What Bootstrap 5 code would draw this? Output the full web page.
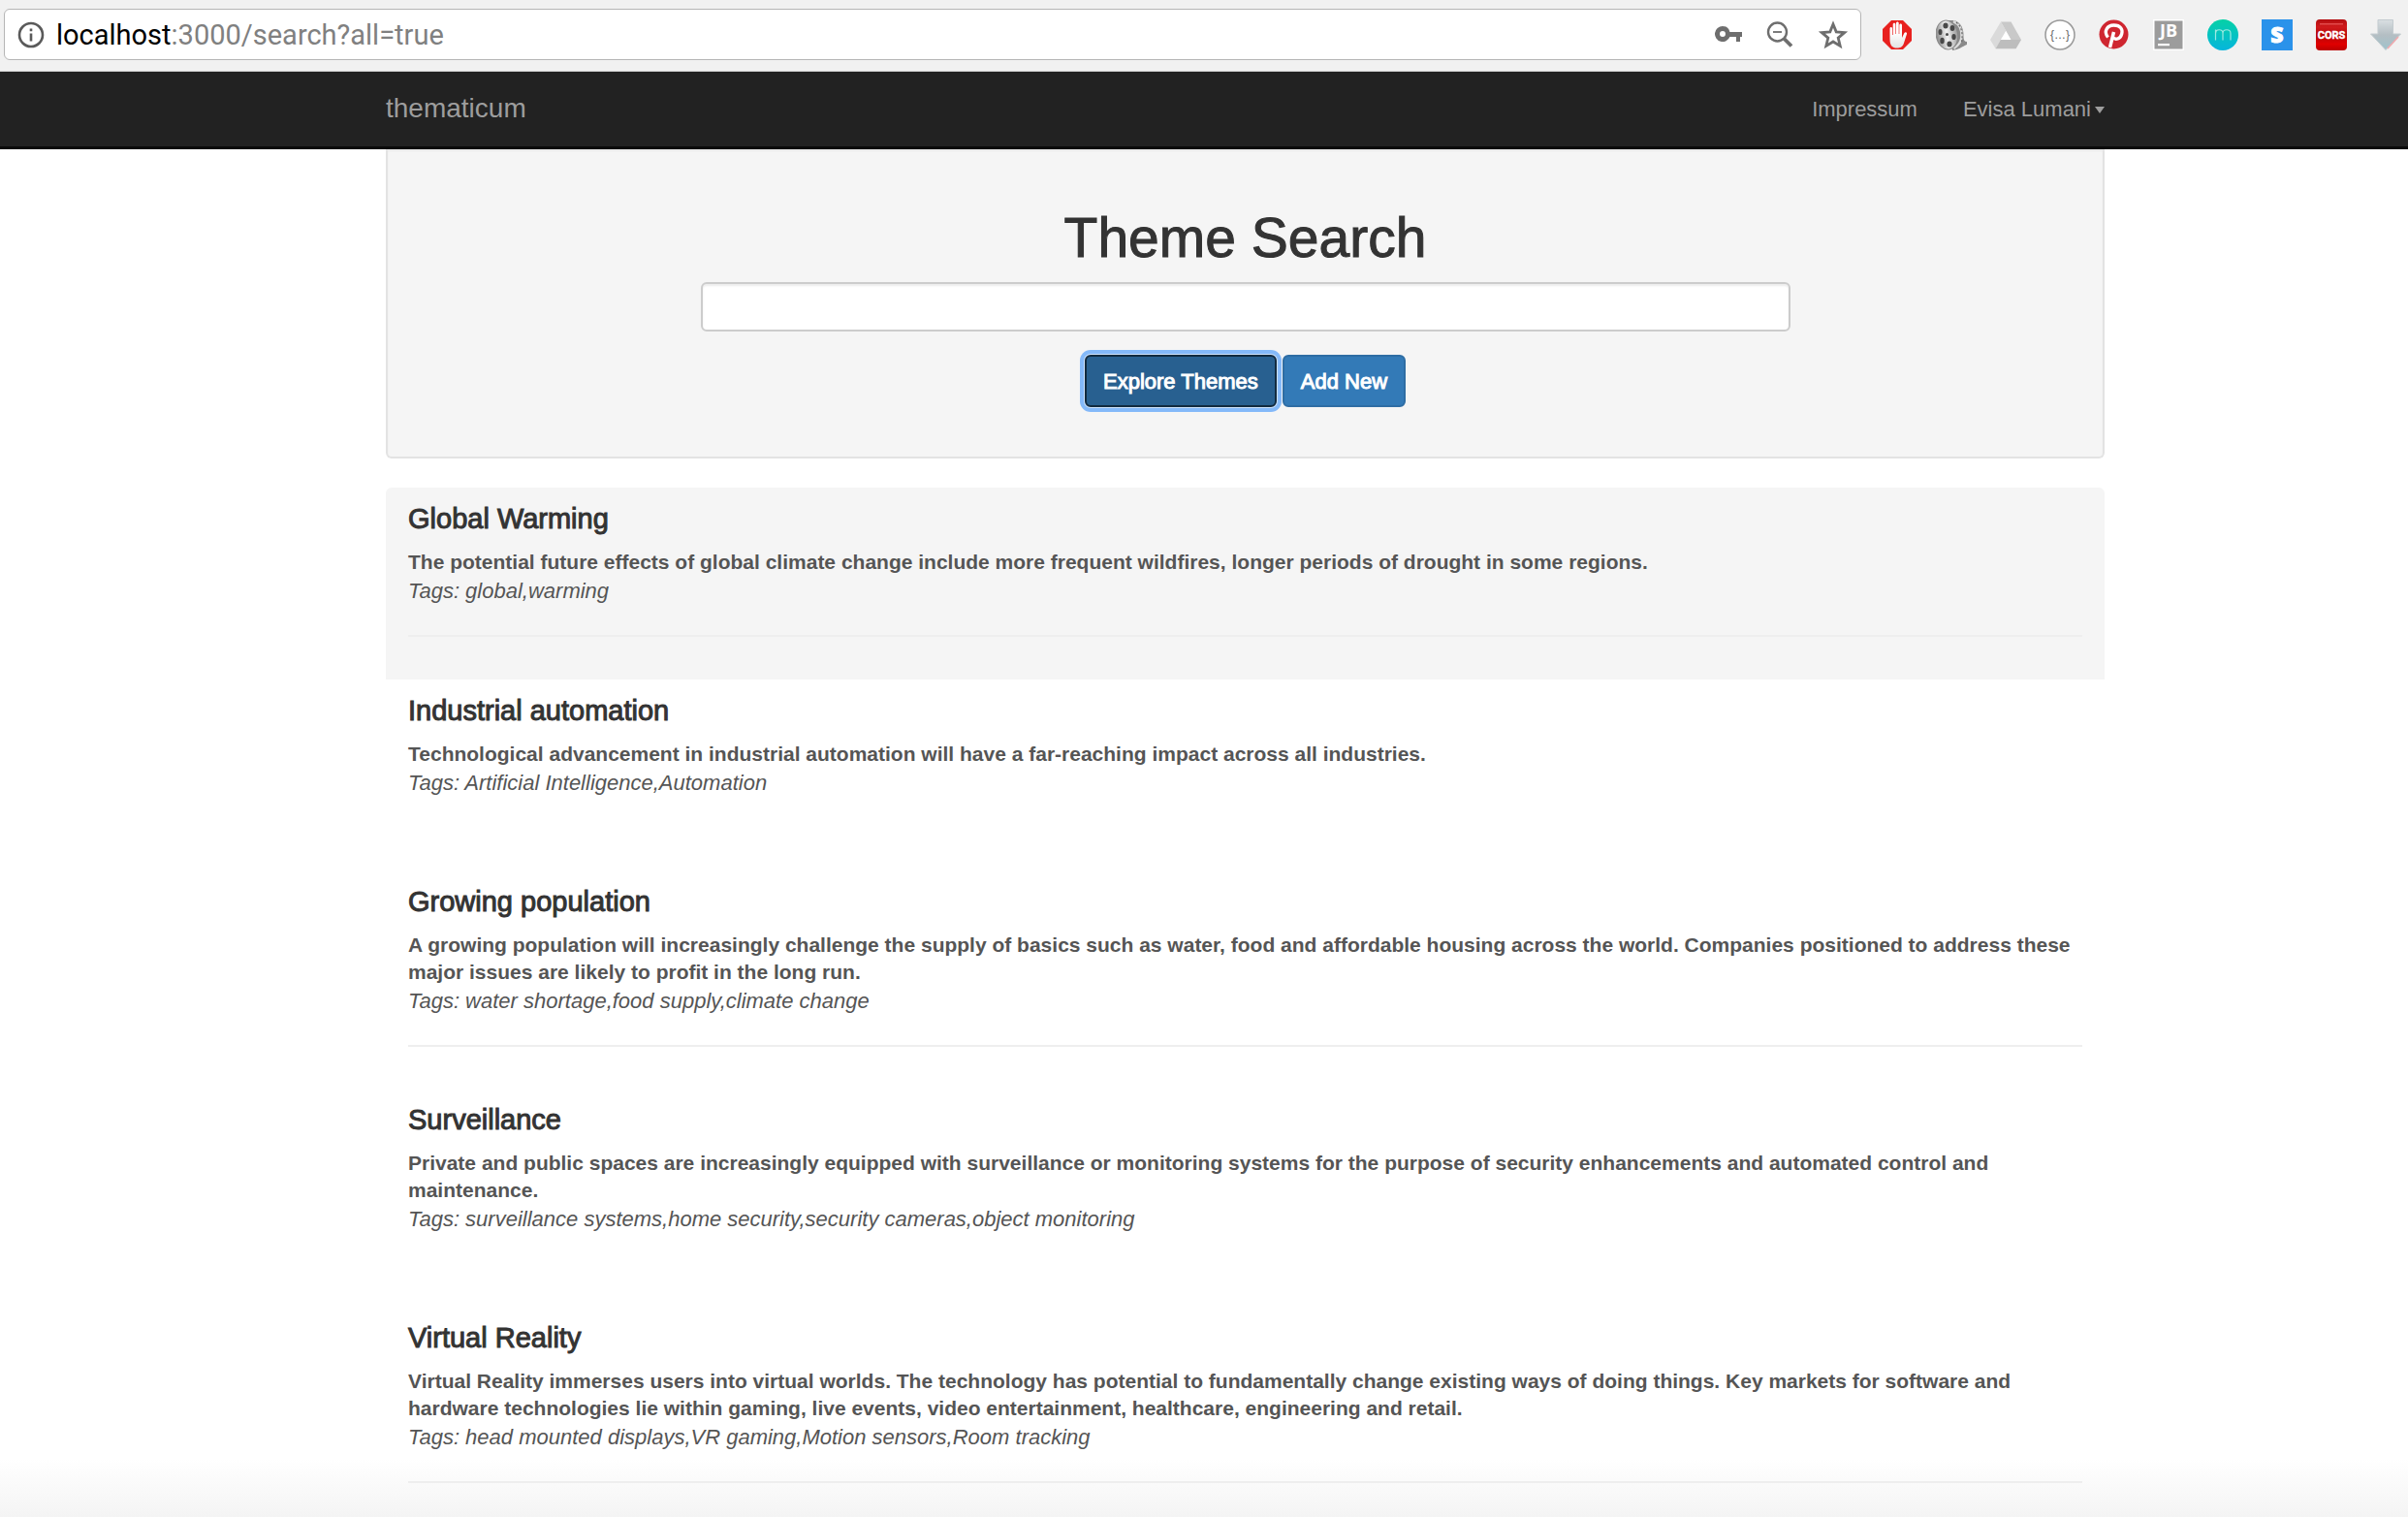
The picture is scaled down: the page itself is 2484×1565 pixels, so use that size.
<!DOCTYPE html>
<html lang="en">
<head>
<meta charset="utf-8">
<meta name="viewport" content="width=device-width, initial-scale=1">
<title>thematicum</title>
<link href="https://cdn.jsdelivr.net/npm/bootstrap@5.3.0/dist/css/bootstrap.min.css" rel="stylesheet">
<style>
  body { font-family: "Liberation Sans", Arial, sans-serif; font-size: 22px; line-height: 31px; color: #555; background: #fff; }
  .page-gutter { padding-left: 398px; padding-right: 313px; }

  /* browser toolbar */
  .toolbar { background: #f1f1f1; border-bottom: 1px solid #cfcfcf; padding: 9px 7px 11px 4px; }
  .address { height: 53px; background: #fff; border: 1px solid #b5b5b5; border-radius: 6px; padding: 0 12px 0 13px; margin-right: 21px; }
  .url-text { font-family: Roboto, sans-serif; font-size: 29px; line-height: 40px; color: #808080; margin-left: 12px; }
  .url-text b { font-weight: 400; color: #000; }
  .tool { background: none; border: 0; padding: 0; line-height: 0; }
  .address-tools { gap: 22px; }
  .extensions { gap: 24px; }

  /* site header */
  .site-nav { background: #222; border-bottom: 3px solid #0a0a0a; height: 80px; padding-top: 0; padding-bottom: 0; }
  .site-nav a { color: #9d9d9d; text-decoration: none; }
  .site-brand { font-size: 28px; padding-bottom: 3px; }
  .site-links { gap: 47px; }
  .user-menu::after { border-top-width: 7px; border-left-width: 5px; border-right-width: 5px; margin-left: 4px; vertical-align: 3px; }

  /* search panel */
  .search-panel { background: #f5f5f5; border: 2px solid #e3e3e3; border-top: 0; border-radius: 0 0 6px 6px; padding: 60px 30px 51px; box-shadow: inset 0 2px 2px rgba(0,0,0,.05); }
  .search-panel h1 { font-size: 57px; line-height: 63px; font-weight: 400; color: #333; margin: 0 0 14px; -webkit-text-stroke: 1px #333; }
  .search-form { max-width: 1124px; }
  .search-box { height: 51px; border: 2px solid #ccc; border-radius: 6px; box-shadow: inset 0 2px 2px rgba(0,0,0,.075); }
  .search-actions { gap: 6px; margin-top: 24px; }
  .search-actions .btn { height: 54px; padding: 0 17px; font-size: 22px; line-height: 31px; border: 2px solid #2e6da4; border-radius: 6px; background: #337ab7; color: #fff; -webkit-text-stroke: 1px #fff; }
  .search-actions .btn-explore { background: #286090; border-color: #122b40; box-shadow: 0 0 0 1px #cfe3fb, 0 0 0 5px #84b9f9; }

  /* results */
  .results { background: linear-gradient(#fff, #f4f4f4) bottom / 100% 60px no-repeat; }
  .theme-list { margin: 30px 0 0; border-radius: 6px; }
  .theme-item { padding: 17px 23px 43px; }
  .theme-item:first-child { background: #f5f5f5; border-radius: 6px 6px 0 0; padding-bottom: 44px; }
  .theme-item:last-child { padding-bottom: 0; }
  .theme-item h2 { font-size: 29px; line-height: 31px; font-weight: 400; color: #333; margin: 0 0 15px; -webkit-text-stroke: 1px #333; }
  .theme-item p { font-size: 21px; line-height: 28px; font-weight: 700; margin: 0; }
  .theme-item em { display: block; }
  .theme-item hr { border-top: 2px solid #eee; opacity: 1; margin: 30px 0 0; }
  .theme-item hr.clear-rule { border-color: transparent; }
</style>
<script src="https://cdn.jsdelivr.net/npm/bootstrap@5.3.0/dist/js/bootstrap.bundle.min.js"></script>
</head>
<body class="d-flex flex-column min-vh-100">

<div class="toolbar d-flex align-items-center">
  <div class="address d-flex align-items-center flex-grow-1">
    <button class="tool" aria-label="Site information">
      <svg width="28" height="28" viewBox="0 0 28 28"><circle cx="14" cy="14" r="12" fill="none" stroke="#5a5a5a" stroke-width="2.6"/><path d="M12.7 12.4h2.6v8h-2.6zM12.7 7.6h2.6v2.7h-2.6z" fill="#5a5a5a"/></svg>
    </button>
    <span class="url-text"><b>localhost</b>:3000/search?all=true</span>
    <div class="address-tools d-flex align-items-center ms-auto">
      <button class="tool" aria-label="Passwords">
        <svg width="32" height="32" viewBox="0 0 32 32" fill="#6e6e6e"><path fill-rule="evenodd" d="M10 7a8 8 0 1 0 7.400 11H24v5h4v-5h2v-5H17.400A8 8 0 0 0 10 7zm0 5a3 3 0 1 1 0 6 3 3 0 0 1 0-6z"/></svg>
      </button>
      <button class="tool" aria-label="Zoom">
        <svg width="32" height="32" viewBox="0 0 32 32" fill="none" stroke="#6e6e6e"><circle cx="12.500" cy="13" r="9.500" stroke-width="2.400"/><path d="M8 13h9" stroke-width="1.800"/><path d="M19.500 20l7.500 7.500" stroke-width="3.800"/></svg>
      </button>
      <button class="tool" aria-label="Bookmark">
        <svg width="32" height="32" viewBox="0 0 32 32" fill="none" stroke="#6e6e6e" stroke-width="2.800"><path d="M16 5l3.200 7.900 8.500.7-6.500 5.500 2 8.300L16 23l-7.200 4.400 2-8.300-6.500-5.500 8.500-.7z"/></svg>
      </button>
    </div>
  </div>

  <div class="extensions d-flex align-items-center">
    <button class="tool" aria-label="Ad blocker">
      <svg width="32" height="32" viewBox="0 0 32 32"><defs><linearGradient id="hand" x2="0" y2="1"><stop offset=".4" stop-color="#fff"/><stop offset="1" stop-color="#e2e2e2"/></linearGradient></defs><path d="M10 1h12l9 9v12l-9 9H10l-9-9V10z" fill="#e8211f"/><path d="M8.500 20V9.500c0-2 2.500-2 2.500 0V16h.7V5.300c0-2 2.700-2 2.700 0V15h.6V4c0-2 2.700-2 2.700 0v11h.6V6c0-2 2.700-2 2.700 0v13l2.300-4.700c1-1.900 3.200-.9 2.700.7l-3.200 10c-1.300 3.800-3.900 4.500-6.900 4.500-5 0-7.400-2.500-7.400-9.500z" fill="url(#hand)"/></svg>
    </button>
    <button class="tool" aria-label="Video reel">
      <svg width="32" height="32" viewBox="0 0 32 32"><defs><linearGradient id="reel"><stop stop-color="#8a8a8a"/><stop offset=".5" stop-color="#f2f2f2"/><stop offset="1" stop-color="#999"/></linearGradient></defs><path d="M12 1h7c7 2 10 9 9.500 17 0 3 1 5 3.500 5v3c-5 2-8 5-15 6z" fill="#8a8a8a"/><path d="M18 2c7 3 9 9 8.500 16-.5 5-3 9-8 12" fill="none" stroke="#dcdcdc" stroke-width="2.500"/><path d="M21 3c6 5 7 12 5.500 21" fill="none" stroke="#666" stroke-width="1.200" stroke-dasharray="2 2"/><ellipse cx="11.500" cy="16" rx="11.200" ry="15" transform="rotate(-10 11.500 16)" fill="url(#reel)" stroke="#888"/><g fill="#484848"><ellipse cx="10" cy="6.500" rx="2.600" ry="2.900"/><ellipse cx="17" cy="9" rx="2.400" ry="3"/><ellipse cx="4.500" cy="13" rx="2" ry="3.100"/><ellipse cx="6.500" cy="22" rx="2.200" ry="3.200"/><ellipse cx="14" cy="25.500" rx="2.600" ry="2.900"/><ellipse cx="18.500" cy="18" rx="2.200" ry="3.100"/><circle cx="11.500" cy="15.500" r="1.500"/></g></svg>
    </button>
    <button class="tool" aria-label="Drive">
      <svg width="32" height="32" viewBox="0 0 32 32"><path d="M11 2.500h10.500L32 21H21.300z" fill="#c9c9c9"/><path d="M11 2.500l5.300 9.300L5.600 30.200 0 21z" fill="#dadada"/><path d="M10.800 21H32l-5.400 9.200h-21z" fill="#bdbdbd"/><path d="M16.300 12l5.100 9H11z" fill="#fff"/></svg>
    </button>
    <button class="tool" aria-label="JSON viewer">
      <svg width="32" height="32" viewBox="0 0 32 32"><circle cx="16" cy="16" r="15" fill="#fff" stroke="#999" stroke-width="1.500"/><text x="16" y="20" text-anchor="middle" font-family="Liberation Sans" font-size="12" fill="#666">{…}</text></svg>
    </button>
    <button class="tool" aria-label="Pinterest">
      <svg width="32" height="32" viewBox="0 0 32 32"><circle cx="15.500" cy="15.500" r="15" fill="#cf2630"/><path d="M11.500 29l4-16" stroke="#fff" stroke-width="3.500" fill="none"/><path d="M9.500 18.500C4.500 12 9 6 15.500 6c7 0 9.500 4.500 8.200 9-1.400 5.300-6.700 7-9.300 3.200" stroke="#fff" stroke-width="3.300" fill="none"/></svg>
    </button>
    <button class="tool" aria-label="JetBrains">
      <svg width="32" height="32" viewBox="0 0 32 32"><path d="M0 0h32v32H0z" fill="#fff"/><path d="M1.500 1.500h29v29h-29z" fill="#9c9c9c"/><text x="16" y="18" text-anchor="middle" font-family="Open Sans" font-weight="700" font-size="18" fill="#fff">JB</text><path d="M5 25h12v2.200H5z" fill="#fff"/></svg>
    </button>
    <button class="tool" aria-label="Momentum">
      <svg width="32" height="32" viewBox="0 0 32 32"><defs><linearGradient id="teal" x2="0" y2="1"><stop stop-color="#06d1a6"/><stop offset="1" stop-color="#06b5dc"/></linearGradient></defs><circle cx="16" cy="16" r="16" fill="url(#teal)"/><path d="M8.500 21.500v-11m0 4c0-5 7.500-5 7.500 0v7m0-7c0-5 8-5 8 0v7" fill="none" stroke="#9de9e2" stroke-width="1.200"/></svg>
    </button>
    <button class="tool" aria-label="Stylish">
      <svg width="32" height="32" viewBox="0 0 32 32"><path d="M0 0h32v32H0z" fill="#2a92ea"/><text x="16" y="24" text-anchor="middle" font-family="Open Sans" font-weight="800" font-size="23" fill="#fff" stroke="#fff">S</text></svg>
    </button>
    <button class="tool" aria-label="CORS">
      <svg width="32" height="32" viewBox="0 0 32 32"><defs><linearGradient id="cors" x2="0" y2="1"><stop stop-color="#b30d10"/><stop offset=".25" stop-color="#d01a1c"/><stop offset=".5" stop-color="#b50709"/><stop offset=".8" stop-color="#e00000"/><stop offset="1" stop-color="#b00"/></linearGradient></defs><rect width="32" height="32" rx="4" fill="url(#cors)"/><path d="M4 4h24v1.500H4z" fill="#e24a4a"/><text x="16" y="20" text-anchor="middle" font-family="Roboto" font-weight="700" font-size="11" fill="#fff" stroke="#fff" stroke-width=".4">CORS</text></svg>
    </button>
    <button class="tool" aria-label="Downloads">
      <svg width="32" height="32" viewBox="0 0 32 32"><defs><linearGradient id="down" x2="0" y2="1"><stop stop-color="#d9dfe2"/><stop offset=".5" stop-color="#b4bec3"/><stop offset="1" stop-color="#9fc3cc"/></linearGradient></defs><path d="M8 .5h15.500V15h8L16 31.500.5 15H8z" fill="url(#down)" stroke="#c3cbcf"/><path d="M29 18L18 30" stroke="#f0a8ac" stroke-width="1.500"/></svg>
    </button>
  </div>
</div>

<nav class="site-nav navbar page-gutter">
  <a class="site-brand" href="#">thematicum</a>
  <div class="site-links d-flex">
    <a href="#">Impressum</a>
    <a class="user-menu dropdown-toggle" href="#" role="button" data-bs-toggle="dropdown">Evisa Lumani</a>
  </div>
</nav>

<main class="results page-gutter flex-grow-1">
  <section class="search-panel text-center">
    <h1><label for="theme-query">Theme Search</label></h1>
    <form class="search-form mx-auto">
      <input id="theme-query" type="text" class="search-box form-control">
      <div class="search-actions d-flex justify-content-center">
        <button type="button" class="btn btn-primary btn-explore">Explore Themes</button>
        <button type="button" class="btn btn-primary">Add New</button>
      </div>
    </form>
  </section>

  <ul class="theme-list list-unstyled">
    <li class="theme-item">
      <h2>Global Warming</h2>
      <p>The potential future effects of global climate change include more frequent wildfires, longer periods of drought in some regions.</p>
      <em>Tags: global,warming</em>
      <hr>
    </li>
    <li class="theme-item">
      <h2>Industrial automation</h2>
      <p>Technological advancement in industrial automation will have a far-reaching impact across all industries.</p>
      <em>Tags: Artificial Intelligence,Automation</em>
      <hr class="clear-rule">
    </li>
    <li class="theme-item">
      <h2>Growing population</h2>
      <p>A growing population will increasingly challenge the supply of basics such as water, food and affordable housing across the world. Companies positioned to address these major issues are likely to profit in the long run.</p>
      <em>Tags: water shortage,food supply,climate change</em>
      <hr>
    </li>
    <li class="theme-item">
      <h2>Surveillance</h2>
      <p>Private and public spaces are increasingly equipped with surveillance or monitoring systems for the purpose of security enhancements and automated control and maintenance.</p>
      <em>Tags: surveillance systems,home security,security cameras,object monitoring</em>
      <hr class="clear-rule">
    </li>
    <li class="theme-item">
      <h2>Virtual Reality</h2>
      <p>Virtual Reality immerses users into virtual worlds. The technology has potential to fundamentally change existing ways of doing things. Key markets for software and hardware technologies lie within gaming, live events, video entertainment, healthcare, engineering and retail.</p>
      <em>Tags: head mounted displays,VR gaming,Motion sensors,Room tracking</em>
      <hr>
    </li>
  </ul>
</main>
</body>
</html>
